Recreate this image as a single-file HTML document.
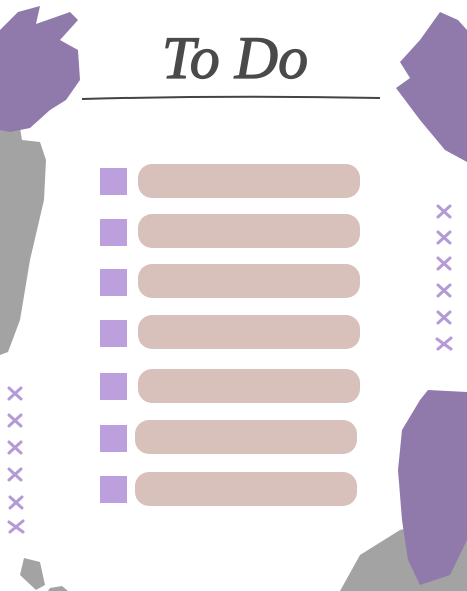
<!DOCTYPE html><html><head><style>body{margin:0;background:#fff}svg{display:block}</style></head><body>
<svg width="467" height="591" viewBox="0 0 467 591" xmlns="http://www.w3.org/2000/svg">
<rect width="467" height="591" fill="#fff"/>
<path d="M0 118 L18 116 L22 140 L40 142 L46 160 L44 200 L30 260 L20 320 L8 352 L0 355Z" fill="#a3a3a3"/>
<path d="M0 30 L18 12 L40 6 L36 24 L70 12 L78 20 L60 40 L78 50 L80 80 L66 100 L50 110 L30 128 L10 132 L0 130Z" fill="#8f7aab"/>
<path d="M440 12 L458 20 L467 30 L467 162 L445 150 L420 120 L405 100 L396 88 L410 78 L400 62 L420 40Z" fill="#8f7aab"/>
<path d="M340 591 L360 555 L400 530 L440 520 L467 525 L467 591Z" fill="#a3a3a3"/>
<path d="M428 390 L467 392 L467 540 L450 575 L420 585 L408 560 L402 520 L398 470 L402 430 L420 400Z" fill="#8f7aab"/>
<path d="M24 558 L40 562 L45 585 L36 590 L20 575Z" fill="#a3a3a3"/>
<path d="M50 588 L62 586 L68 591 L48 591Z" fill="#a3a3a3"/>
<text x="235" y="78" text-anchor="middle" font-family="Liberation Serif, serif" font-style="italic" font-size="60" fill="#4a4a4a" stroke="#4a4a4a" stroke-width="1.2">To Do</text>
<path d="M82 99 Q230 95 380 98" stroke="#444" stroke-width="2" fill="none"/>
<g fill="#d8c0bb">
<rect x="138" y="164" width="222" height="34" rx="14"/>
<rect x="138" y="214" width="222" height="34" rx="14"/>
<rect x="138" y="264" width="222" height="34" rx="14"/>
<rect x="138" y="315" width="222" height="34" rx="14"/>
<rect x="138" y="369" width="222" height="34" rx="14"/>
<rect x="135" y="420" width="222" height="34" rx="14"/>
<rect x="135" y="472" width="222" height="34" rx="14"/>
</g>
<g fill="#bca0de">
<rect x="100" y="168" width="27" height="27"/>
<rect x="100" y="219" width="27" height="27"/>
<rect x="100" y="269" width="27" height="27"/>
<rect x="100" y="320" width="27" height="27"/>
<rect x="100" y="373" width="27" height="27"/>
<rect x="100" y="425" width="27" height="27"/>
<rect x="100" y="476" width="27" height="27"/>
</g>
<g stroke="#b59ad8" stroke-width="3" stroke-linecap="round">
<path d="M9 388l12 11M21 388l-12 11M9 415l12 11M21 415l-12 11M9 442l12 11M21 442l-12 11M9 469l12 11M21 469l-12 11M10 497l12 11M22 497l-12 11M9 522l14 10M23 521l-13 11"/>
<path d="M438 206l12 11M450 206l-12 11M438 232l12 11M450 232l-12 11M438 258l12 11M450 258l-12 11M438 285l12 11M450 285l-12 11M438 312l12 11M450 312l-12 11M437 339l14 10M451 338l-13 11"/>
</g>
</svg>
</body></html>
